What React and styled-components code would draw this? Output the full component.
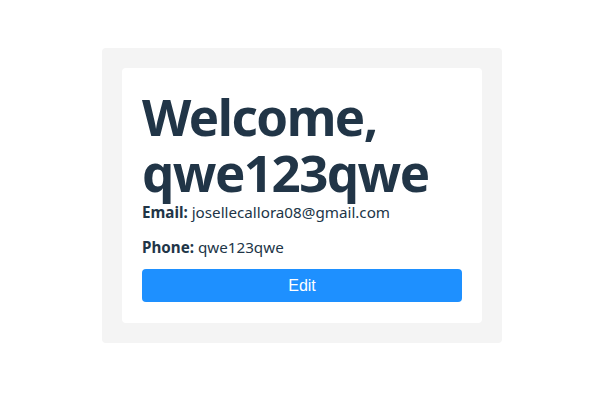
import React from "react";
import styled, { createGlobalStyle } from "styled-components";

const GlobalStyle = createGlobalStyle`
  body {
    margin: 0;
    background: #fff;
    font-family: "Noto Sans", "Open Sans", sans-serif;
    color: #213547;
  }
`;

const Page = styled.div`
  display: flex;
  justify-content: center;
  padding: 48px 0 0 2px;
`;

const Frame = styled.div`
  width: 400px;
  box-sizing: border-box;
  padding: 20px;
  background: #f4f4f4;
  border-radius: 4px;
`;

const Card = styled.div`
  background: #fff;
  border-radius: 4px;
  padding: 20px 20px 21px;
`;

const Heading = styled.h1`
  margin: 0;
  font-size: 51px;
  line-height: 56px;
  letter-spacing: -1.5px;
  font-weight: 700;
  color: #213547;
`;

const Line = styled.p`
  margin: ${(p) => (p.$first ? "0" : "11px 0 0")};
  font-size: 15.2px;
  line-height: 24px;
  color: #213547;
`;

const Label = styled.strong`
  font-weight: 700;
`;

const Button = styled.button`
  display: block;
  width: 100%;
  height: 33px;
  margin-top: 10px;
  border: none;
  border-radius: 4px;
  background: #1e90ff;
  color: #fff;
  font-family: "Liberation Sans", Arial, sans-serif;
  font-size: 16px;
  cursor: pointer;
`;

const App = () => {
  return (
    <>
      <GlobalStyle />
      <Page>
        <Frame>
          <Card>
            <Heading>
              Welcome,
              <br />
              qwe123qwe
            </Heading>
            <Line $first>
              <Label>Email:</Label> josellecallora08@gmail.com
            </Line>
            <Line>
              <Label>Phone:</Label> qwe123qwe
            </Line>
            <Button>Edit</Button>
          </Card>
        </Frame>
      </Page>
    </>
  );
};

export default App;
